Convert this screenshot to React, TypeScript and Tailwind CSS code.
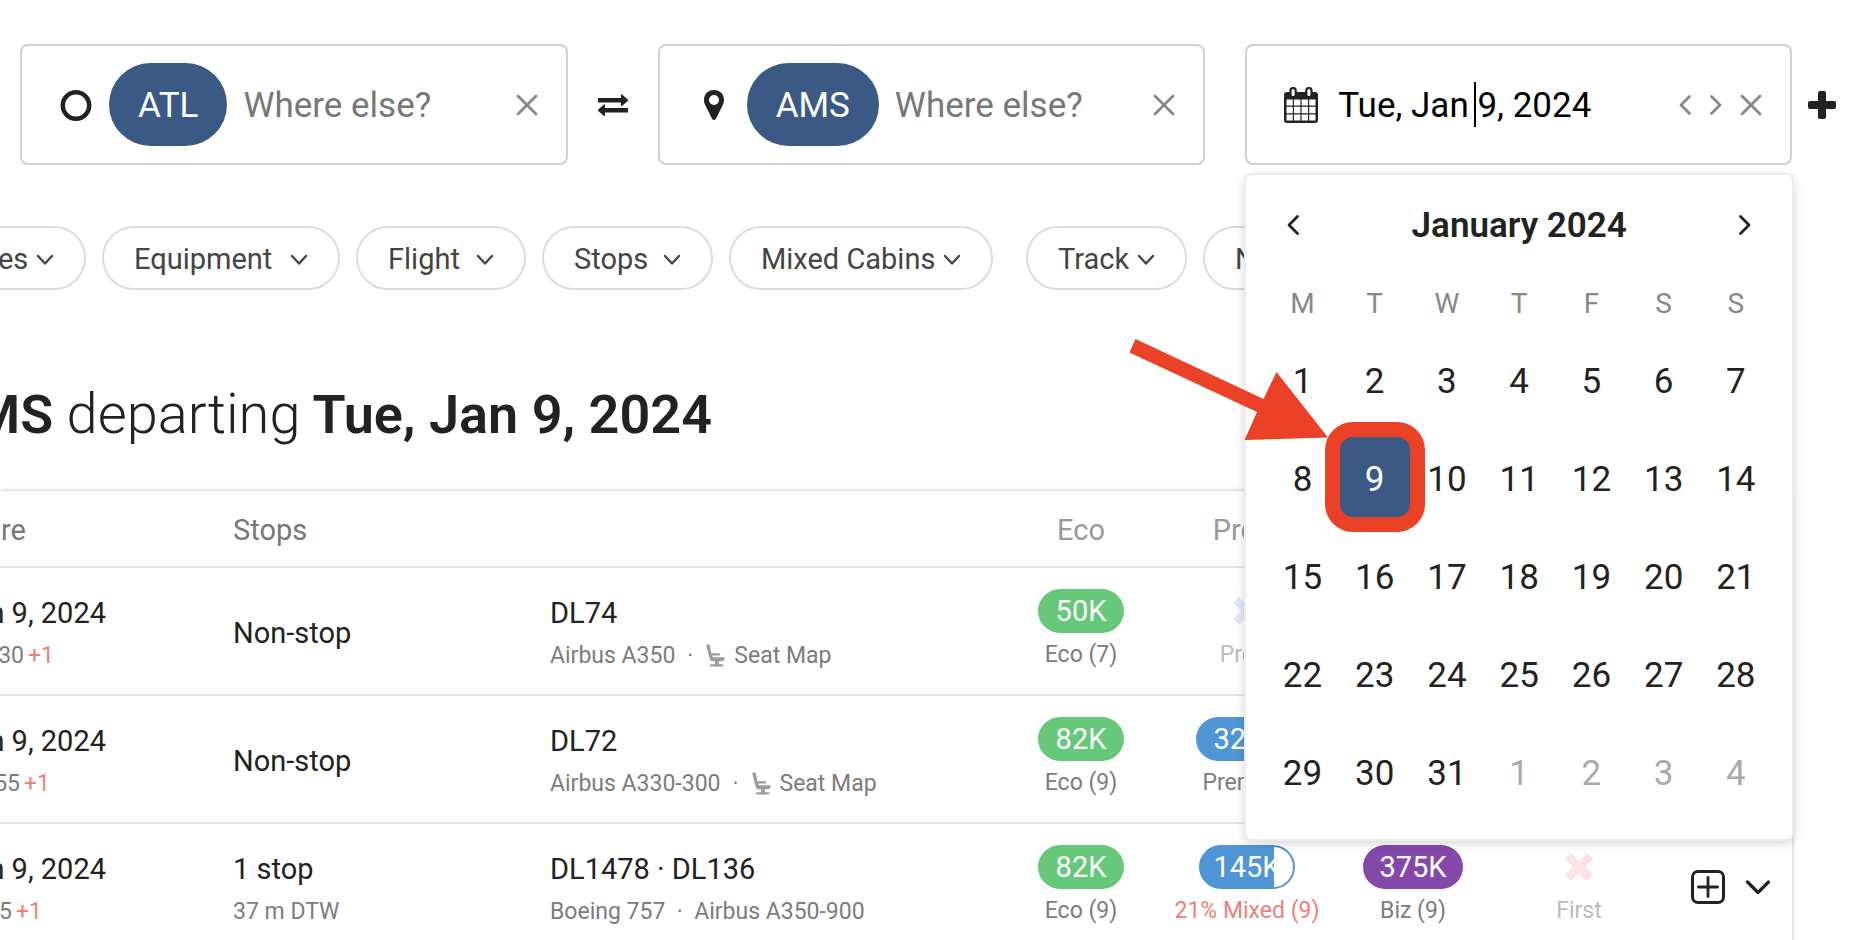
import React from "react";

type IconProps = { className?: string };

function CloseIcon({ className = "" }: IconProps) {
  return (
    <svg viewBox="0 0 22 22" className={`h-[22px] w-[22px] ${className}`} fill="none" stroke="currentColor" strokeWidth="2.8" strokeLinecap="round" aria-hidden="true">
      <path d="M2 2L20 20M20 2L2 20" />
    </svg>
  );
}

function AngleLeft({ className = "" }: IconProps) {
  return (
    <svg viewBox="0 0 14 22" className={`h-[22px] w-[14px] ${className}`} fill="none" stroke="currentColor" strokeWidth="2.8" strokeLinecap="round" strokeLinejoin="round" aria-hidden="true">
      <path d="M11.500 2.500L3 11L11.500 19.500" />
    </svg>
  );
}

function AngleRight({ className = "" }: IconProps) {
  return (
    <svg viewBox="0 0 14 22" className={`h-[22px] w-[14px] ${className}`} fill="none" stroke="currentColor" strokeWidth="2.8" strokeLinecap="round" strokeLinejoin="round" aria-hidden="true">
      <path d="M2.500 2.500L11 11L2.500 19.500" />
    </svg>
  );
}

function AngleDown({ className = "" }: IconProps) {
  return (
    <svg viewBox="0 0 18 12" className={`h-3 w-[18px] shrink-0 ${className}`} fill="none" stroke="currentColor" strokeWidth="2.4" strokeLinecap="round" strokeLinejoin="round" aria-hidden="true">
      <path d="M2 2L9 9.500L16 2" />
    </svg>
  );
}

function RingIcon() {
  return (
    <svg viewBox="0 0 32 32" className="h-8 w-8" fill="none" stroke="#222" strokeWidth="4.5" aria-hidden="true">
      <circle cx="16" cy="16.500" r="13.200" />
    </svg>
  );
}

function PinIcon() {
  return (
    <svg viewBox="0 0 32 32" className="h-8 w-8" fill="#222" aria-hidden="true">
      <path fillRule="evenodd" d="M16 1C10.100 1 6 5.300 6 11c0 2 .5 3.500 1.200 5l7 14c.8 1.300 2.800 1.300 3.600 0l7-14c.7-1.500 1.200-3 1.200-5C26 5.300 21.900 1 16 1zm0 5a5 5 0 1 1 0 10a5 5 0 0 1 0-10z" />
    </svg>
  );
}

function CalendarIcon() {
  return (
    <svg viewBox="0 0 34 36" className="h-9 w-[34px] shrink-0" aria-hidden="true">
      <path fill="#222" d="M3 5h28a3 3 0 0 1 3 3v25a3 3 0 0 1-3 3H3a3 3 0 0 1-3-3V8a3 3 0 0 1 3-3z" />
      <path fill="#fff" d="M2.500 12.500h6.300v6H2.500zM10 12.500h6.400v6H10zM17.600 12.500H24v6h-6.400zM25.200 12.500h6.300v6h-6.300zM2.500 19.800h6.300v6.400H2.500zM10 19.800h6.400v6.400H10zM17.600 19.800H24v6.400h-6.400zM25.200 19.800h6.300v6.400h-6.300zM2.500 27.500h6.300v6.100H2.500zM10 27.500h6.400v6.100H10zM17.600 27.500H24v6.100h-6.400zM25.200 27.500h6.300v6.100h-6.300z" />
      <rect x="6.500" y="1" width="5.200" height="9" rx="2.600" fill="#fff" stroke="#222" strokeWidth="2.200" />
      <rect x="22.300" y="1" width="5.200" height="9" rx="2.600" fill="#fff" stroke="#222" strokeWidth="2.200" />
    </svg>
  );
}

function SwapIcon() {
  return (
    <svg viewBox="0 0 30 22" className="h-[22px] w-[30px]" fill="#222" aria-hidden="true">
      <path d="M0 4h23V.8c0-.6.6-.8 1-.4l5.700 5.200c.4.400.4.900 0 1.300L24 12c-.4.400-1 .2-1-.4V8.500H0z" />
      <path d="M30 14H7v-3.200c0-.6-.6-.8-1-.4L.3 15.600c-.4.400-.4.900 0 1.300L6 22c.4.400 1 .2 1-.4v-3.100h23z" />
    </svg>
  );
}

function PlusIcon() {
  return (
    <svg viewBox="0 0 28 28" className="h-7 w-7" fill="#222" aria-hidden="true">
      <rect x="10" y="0" width="8" height="28" rx="2" />
      <rect x="0" y="10" width="28" height="8" rx="2" />
    </svg>
  );
}

function SeatIcon() {
  return (
    <svg viewBox="0 0 20 24" className="mr-2 ml-[13px] h-6 w-5" fill="#9c9c9c" aria-hidden="true">
      <path d="M.4 2.200C.2-.1 3.700-.3 4 2L5 7.500L6.900 13.300H17.500c1 0 1.300.8 1 1.700c-.5 1.500-1.500 2.300-3 2.300H7.200c-2 0-2.900-.7-3.400-2.300z" />
      <rect x="5.500" y="9.200" width="8.800" height="2.300" rx="1.100" />
      <path d="M9 17h3.800v4H9z" />
      <rect x="4" y="20.300" width="13.300" height="2.200" rx="1" />
    </svg>
  );
}

function CrossIcon({ className = "" }: IconProps) {
  return (
    <svg viewBox="0 0 30 30" className={`h-[30px] w-[30px] ${className}`} fill="none" stroke="currentColor" strokeWidth="8.500" aria-hidden="true">
      <path d="M4 4L26 26M26 4L4 26" />
    </svg>
  );
}

function AddBoxIcon() {
  return (
    <svg viewBox="0 0 34 34" className="h-[34px] w-[34px]" fill="none" stroke="#222" strokeWidth="3" strokeLinecap="round" aria-hidden="true">
      <rect x="1.500" y="1.500" width="31" height="31" rx="5.500" />
      <path d="M17 7.500V26.500M7.500 17H26.500" strokeWidth="2.800" />
    </svg>
  );
}

function PlaceField({ icon, code, label }: { icon: React.ReactNode; code: string; label: string }) {
  return (
    <div className="flex h-[121px] min-w-0 flex-1 items-center rounded-lg border-2 border-[#d0d0d0] bg-white pr-7 pl-[38px]">
      {icon}
      <span className="ml-[17px] flex h-[83px] shrink-0 items-center rounded-full bg-[#3a5a85] px-[29px] pt-1 text-[35px] text-white">
        {code}
      </span>
      <input
        type="text"
        aria-label={label}
        placeholder="Where else?"
        className="ml-4 min-w-0 flex-1 bg-transparent pt-1 text-[35px] outline-none placeholder:text-[#777]"
      />
      <button type="button" aria-label={`Clear ${label}`} className="text-[#888]">
        <CloseIcon />
      </button>
    </div>
  );
}

const weekdays = ["M", "T", "W", "T", "F", "S", "S"];
const days = Array.from({ length: 35 }, (_, i) => (i < 31 ? i + 1 : i - 30));

function CalendarPopup() {
  return (
    <div className="absolute top-full -right-0.5 -left-px z-10 mt-3 h-[664px] rounded-md bg-white px-5 shadow-[0_0_0_2px_#ececec,0_3px_12px_rgba(0,0,0,0.22)]">
      <div className="flex h-[100px] items-center justify-between px-5 text-[#222]">
        <button type="button" aria-label="Previous month"><AngleLeft /></button>
        <h2 className="pt-0.5 text-[35px] font-semibold">January 2024</h2>
        <button type="button" aria-label="Next month"><AngleRight /></button>
      </div>
      <div className="grid h-[55px] grid-cols-7 items-center pt-0.5 text-center text-[28px] text-[#888]">
        {weekdays.map((d, i) => (
          <span key={i}>{d}</span>
        ))}
      </div>
      <div className="grid grid-cols-7 text-[35px]">
        {days.map((d, i) => (
          <div key={i} className="flex h-[98px] items-center justify-center">
            {i === 8 ? (
              <button type="button" aria-pressed="true" className="relative h-[82px] w-[72px] bg-[#3a5a85] pt-1.5 text-white">
                {d}
                <span className="absolute -inset-[14px] rounded-[28px] border-[15px] border-[#ea4127]" />
              </button>
            ) : (
              <button type="button" className={i > 30 ? "pt-1.5 text-[#aaa]" : "pt-1.5 text-[#222]"}>{d}</button>
            )}
          </div>
        ))}
      </div>
      <svg viewBox="0 0 200 104" className="absolute top-[162px] -left-[118px] h-[104px] w-[200px]" fill="#ea4127" aria-hidden="true">
        <path d="M7.500 2L1.500 15.500L129 75L116.500 103L200 100.500L148.500 35L135.500 62Z" />
      </svg>
    </div>
  );
}

const filters = [
  { label: "Airlines", box: "w-[186px] -ml-[100px]" },
  { label: "Equipment", box: "w-[238px]" },
  { label: "Flight", box: "w-[170px]" },
  { label: "Stops", box: "w-[171px]" },
  { label: "Mixed Cabins", box: "w-[264px] mr-[17px]" },
  { label: "Track", box: "w-[161px]" },
  { label: "Nearby", box: "w-[190px]" },
];

type Price = { tag: React.ReactNode; note: string; noteColor?: string };
type Flight = { time: string; timeBox: string; stops: string; via?: string; codes: string; planes: string; seats: boolean; prices: Price[] };

function Tag({ color, children }: { color: string; children: React.ReactNode }) {
  return <span className={`flex h-11 items-center rounded-full pt-0.5 text-[29px] text-white ${color}`}>{children}</span>;
}

const green = "bg-[#66c97a] px-[18px]";
const flights: Flight[] = [
  {
    time: ":30", timeBox: "w-[54px]", stops: "Non-stop", codes: "DL74", planes: "Airbus A350", seats: true,
    prices: [
      { tag: <Tag color={green}>50K</Tag>, note: "Eco (7)" },
      { tag: <CrossIcon className="text-[#dfe9f5]" />, note: "Prem", noteColor: "text-[#bbb]" },
    ],
  },
  {
    time: "55", timeBox: "w-[50px]", stops: "Non-stop", codes: "DL72", planes: "Airbus A330-300", seats: true,
    prices: [
      { tag: <Tag color={green}>82K</Tag>, note: "Eco (9)" },
      { tag: <Tag color="bg-[#5096d6] px-[17px]">320K</Tag>, note: "Prem (9)" },
    ],
  },
  {
    time: "35", timeBox: "w-[42px]", stops: "1 stop", via: "37 m DTW", codes: "DL1478 · DL136", planes: "Boeing 757  ·  Airbus A350-900", seats: false,
    prices: [
      { tag: <Tag color={green}>82K</Tag>, note: "Eco (9)" },
      {
        tag: <Tag color="border-2 border-[#5096d6] px-3 bg-[linear-gradient(to_right,#5096d6_79%,#fff_79%)]">145K</Tag>,
        note: "21% Mixed (9)",
        noteColor: "text-[#ee8078]",
      },
      { tag: <Tag color="bg-[#8449a8] px-4">375K</Tag>, note: "Biz (9)" },
      { tag: <CrossIcon className="text-[#fbe3e1]" />, note: "First", noteColor: "text-[#bbb]" },
    ],
  },
];

const mainLine = "text-[29px] leading-[46px] whitespace-pre";
const subLine = "flex items-center text-[23px] leading-[40px] whitespace-pre text-[#7c7c7c]";

function FlightRow({ flight }: { flight: Flight }) {
  return (
    <tr className="h-32 border-b-2 border-[#e2e2e2]">
      <td className="overflow-hidden pt-1">
        <div className={`${mainLine} flex w-[106px] justify-end`}>Jan 9, 2024</div>
        <div className={`${subLine} ${flight.timeBox} justify-end`}>
          {flight.time}
          <span className="ml-1 text-[#ee8078]">+1</span>
        </div>
      </td>
      <td className="pt-1">
        <div className={mainLine}>{flight.stops}</div>
        {flight.via && <div className={subLine}>{flight.via}</div>}
      </td>
      <td className="pt-1">
        <div className={mainLine}>{flight.codes}</div>
        <div className={subLine}>
          {flight.planes}
          {flight.seats && (
            <>
              <span className="ml-3">·</span>
              <SeatIcon />
              <a href="#seat-map">Seat Map</a>
            </>
          )}
        </div>
      </td>
      {[0, 1, 2, 3].map((i) => {
        const price = flight.prices[i];
        return (
          <td key={i} className="pt-0.5">
            {price && (
              <div className="flex flex-col items-center">
                <div className="flex h-11 items-center">{price.tag}</div>
                <div className={`text-[23px] leading-[43px] whitespace-nowrap ${price.noteColor ?? "text-[#7c7c7c]"}`}>{price.note}</div>
              </div>
            )}
          </td>
        );
      })}
      <td>
        <div className="flex items-center justify-end gap-5 pr-[21px]">
          <button type="button" aria-label="Add flight"><AddBoxIcon /></button>
          <button type="button" aria-label="Show details">
            <svg viewBox="0 0 26 18" className="h-[18px] w-[26px]" fill="none" stroke="#222" strokeWidth="3.200" strokeLinecap="round" strokeLinejoin="round" aria-hidden="true">
              <path d="M2.500 4L13 14.500L23.500 4" />
            </svg>
          </button>
        </div>
      </td>
    </tr>
  );
}

export default function App() {
  return (
    <main className="h-screen overflow-hidden bg-white pt-11 font-['Roboto',sans-serif] text-[#222]">
      <form className="flex items-center pr-10 pl-5">
        <PlaceField icon={<RingIcon />} code="ATL" label="Origin" />
        <button type="button" aria-label="Swap places" className="flex w-[90px] justify-center">
          <SwapIcon />
        </button>
        <PlaceField icon={<PinIcon />} code="AMS" label="Destination" />
        <div className="relative ml-10 flex h-[121px] min-w-0 flex-1 items-center rounded-lg border-2 border-[#d0d0d0] bg-white pr-7 pl-[37px]">
          <CalendarIcon />
          <div className="relative ml-5 min-w-0 flex-1">
            <input type="text" aria-label="Departure date" defaultValue="Tue, Jan 9, 2024" className="w-full bg-transparent pt-1 text-[35px] text-black outline-none" />
            <span className="absolute inset-y-1.5 left-[136px] w-0.5 bg-black" />
          </div>
          <div className="flex items-center gap-[17px] text-[#888]">
            <button type="button" aria-label="Previous day"><AngleLeft /></button>
            <button type="button" aria-label="Next day"><AngleRight /></button>
            <button type="button" aria-label="Clear date"><CloseIcon /></button>
          </div>
          <CalendarPopup />
        </div>
        <button type="button" aria-label="Add date" className="ml-4">
          <PlusIcon />
        </button>
      </form>

      <div className="mt-[61px] flex gap-4">
        {filters.map((f) => (
          <button
            key={f.label}
            type="button"
            className={`flex h-16 shrink-0 items-center justify-between rounded-full border-2 border-[#dcdce0] px-[30px] pt-1 text-[29px] text-[#444] ${f.box}`}
          >
            {f.label}
            <AngleDown />
          </button>
        ))}
      </div>

      <h1 className="mt-[88px] flex w-[712px] items-baseline justify-end text-[54px] leading-[72px] font-semibold whitespace-pre">
        AMS <span className="text-[56px] font-light">departing</span> Tue, Jan 9, 2024
      </h1>

      <section className="mt-10 mr-[84px] bg-white shadow-[0_0_4px_rgba(0,0,0,0.3)]">
        <table className="w-full table-fixed border-collapse text-left">
          <colgroup>
            <col className="w-[233px]" />
            <col className="w-[317px]" />
            <col />
            <col className="w-[166px]" />
            <col className="w-[166px]" />
            <col className="w-[166px]" />
            <col className="w-[166px]" />
            <col className="w-[130px]" />
          </colgroup>
          <thead>
            <tr className="h-[76px] border-b-2 border-[#e2e2e2] text-[29px] text-[#777]">
              <th className="pt-1 font-normal"><div className="flex w-[26px] justify-end">Departure</div></th>
              <th className="pt-1 font-normal">Stops</th>
              <th aria-label="Flights" />
              <th className="pt-1 text-center font-normal text-[#999]">Eco</th>
              <th className="pt-1 text-center font-normal text-[#999]">Prem</th>
              <th className="pt-1 text-center font-normal text-[#999]">Biz</th>
              <th className="pt-1 text-center font-normal text-[#999]">First</th>
              <th aria-label="Actions" />
            </tr>
          </thead>
          <tbody>
            {flights.map((f) => (
              <FlightRow key={f.codes} flight={f} />
            ))}
          </tbody>
        </table>
      </section>
    </main>
  );
}
